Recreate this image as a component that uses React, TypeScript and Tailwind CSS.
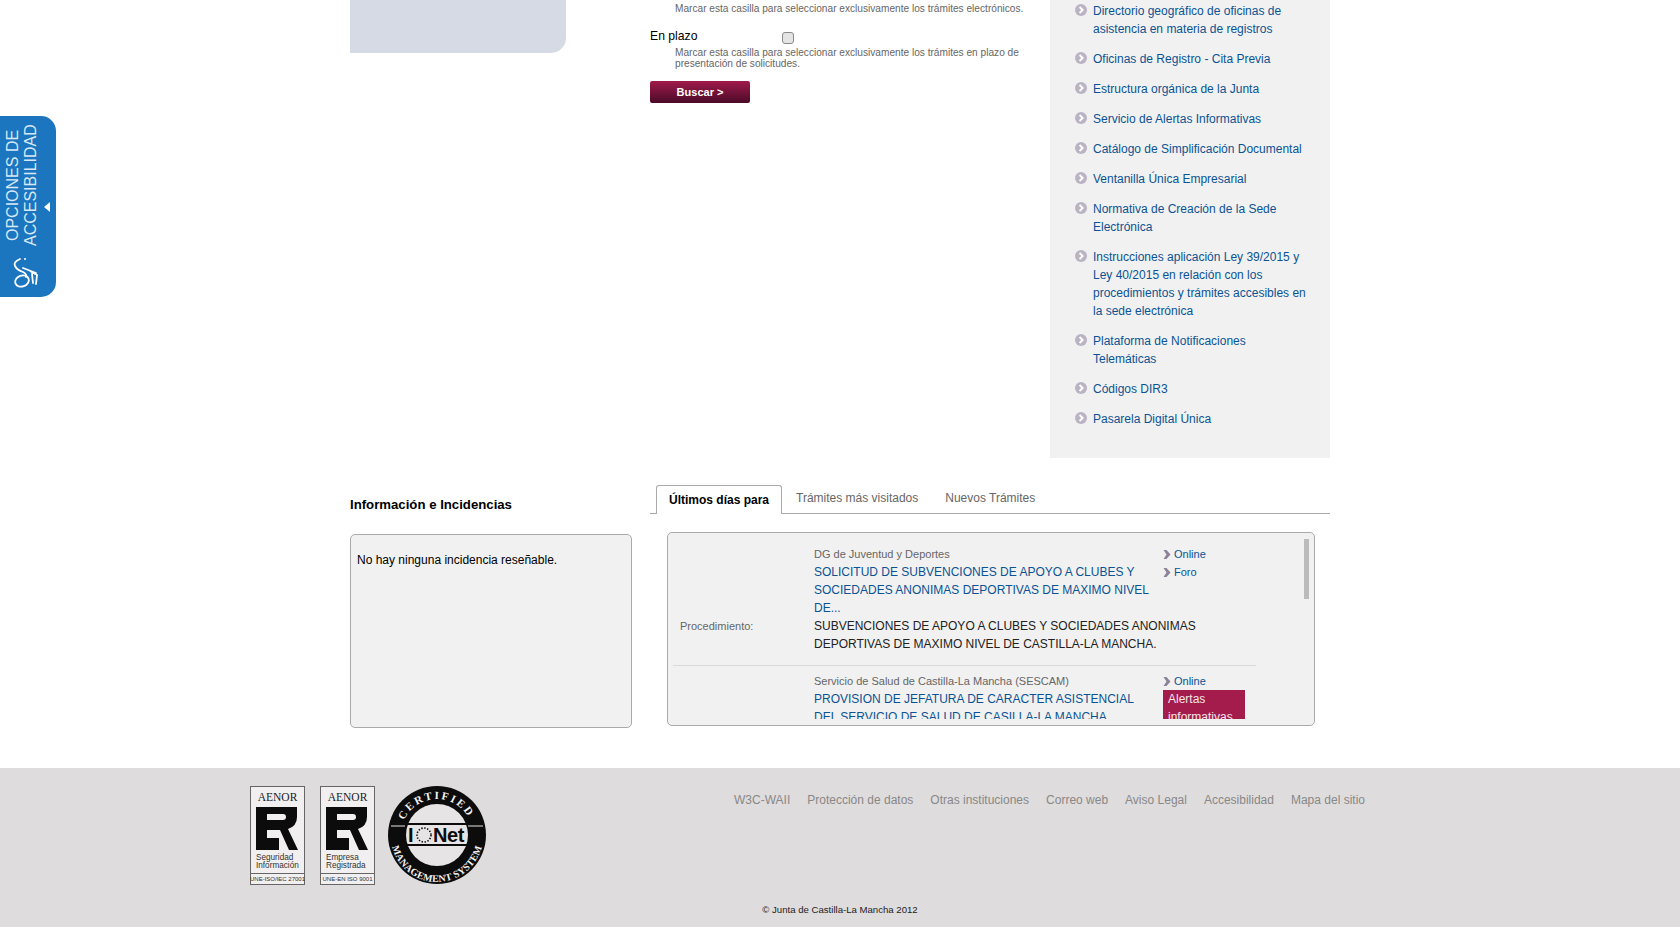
import React from 'react';

const sideLinks = [
  'Directorio geográfico de oficinas de asistencia en materia de registros',
  'Oficinas de Registro - Cita Previa',
  'Estructura orgánica de la Junta',
  'Servicio de Alertas Informativas',
  'Catálogo de Simplificación Documental',
  'Ventanilla Única Empresarial',
  'Normativa de Creación de la Sede Electrónica',
  'Instrucciones aplicación Ley 39/2015 y Ley 40/2015 en relación con los procedimientos y trámites accesibles en la sede electrónica',
  'Plataforma de Notificaciones Telemáticas',
  'Códigos DIR3',
  'Pasarela Digital Única',
];

const footerLinks = ['W3C-WAII', 'Protección de datos', 'Otras instituciones', 'Correo web', 'Aviso Legal', 'Accesibilidad', 'Mapa del sitio'];

const Bullet = () => (
  <svg width="12" height="12" viewBox="0 0 12 12" className="mt-[2px] shrink-0">
    <circle cx="6" cy="6" r="6" fill="#b9b3c4" />
    <path d="M4.6 3 L7.6 6 L4.6 9" fill="none" stroke="#fff" strokeWidth="2" />
  </svg>
);

const Chevron = () => (
  <svg width="8" height="9" viewBox="0 0 8 9" className="mr-[3px] shrink-0">
    <path d="M0.5 0 H3.5 L7.5 4.5 L3.5 9 H0.5 L3.5 4.5 Z" fill="#8d8398" />
  </svg>
);

const LinkRow = ({ label }: { label: string }) => (
  <div className="flex h-[18px] items-center text-[11px] text-[#0b5394]">
    <Chevron />
    {label}
  </div>
);

const Er = () => (
  <path
    fill="#0c0c0c"
    fillRule="evenodd"
    d="M6 21 H47 V31 Q47 40 38 43 L48 64 H39 L30 44 H17 V52 H29 V64 H6 Z M17 28 H33 Q36 28 36 31 Q36 34 33 34 H17 Z"
  />
);

const AenorLogo = ({ top, bottom, code }: { top: string; bottom: string; code: string }) => (
  <svg width="55" height="99" viewBox="0 0 55 99" className="shrink-0">
    <rect x="0.5" y="0.5" width="54" height="98" fill="#f1efef" stroke="#666" />
    <text x="27.5" y="15" textAnchor="middle" fontFamily="Liberation Serif" fontSize="11.5" fill="#222">AENOR</text>
    <Er />
    <text x="6" y="74" fontFamily="Liberation Sans" fontSize="8.2" fill="#333">{top}</text>
    <text x="6" y="82" fontFamily="Liberation Sans" fontSize="8.2" fill="#333">{bottom}</text>
    <line x1="0" y1="87.5" x2="55" y2="87.5" stroke="#666" />
    <text x="27.5" y="95" textAnchor="middle" fontFamily="Liberation Sans" fontSize="6" fill="#333">{code}</text>
  </svg>
);

const IqNetLogo = () => (
  <svg width="98" height="98" viewBox="0 0 98 98" className="shrink-0">
    <defs>
      <path id="arc-top" d="M13 49 A36 36 0 0 1 85 49" />
      <path id="arc-bottom" d="M3 50 A46 46 0 0 0 95 50" />
    </defs>
    <circle cx="49" cy="49" r="49" fill="#0c0c0c" />
    <circle cx="49" cy="49" r="31" fill="#e6e4e4" />
    <rect x="17" y="37" width="62" height="2" fill="#0c0c0c" />
    <rect x="17" y="58" width="62" height="2" fill="#0c0c0c" />
    <path d="M3 40 H17 M80 40 H95" stroke="#e6e4e4" strokeWidth="1" />
    <text fontFamily="Liberation Serif" fontWeight="700" fontSize="11" fill="#f3f3f3" letterSpacing="2.2">
      <textPath href="#arc-top" startOffset="15">CERTIFIED</textPath>
    </text>
    <text fontFamily="Liberation Serif" fontWeight="700" fontSize="10" fill="#f3f3f3" letterSpacing="0.2">
      <textPath href="#arc-bottom" startOffset="72" textAnchor="middle">MANAGEMENT SYSTEM</textPath>
    </text>
    <text x="20" y="56" fontFamily="Liberation Sans" fontWeight="700" fontSize="20" fill="#0c0c0c">I</text>
    <circle cx="36" cy="49" r="7" fill="none" stroke="#0c0c0c" strokeWidth="1.6" strokeDasharray="1.4 1.6" />
    <text x="45" y="56" fontFamily="Liberation Sans" fontWeight="700" fontSize="20" letterSpacing="-0.4" fill="#0c0c0c">Net</text>
  </svg>
);

const AccessTab = () => (
  <div className="absolute left-0 top-[116px] flex h-[181px] w-[56px] flex-col items-start rounded-r-[15px] bg-[#1b75bf]">
    <div className="h-[130px] w-full">
      <div className="ml-[4px] h-[138px] rotate-180 text-center text-[16px] leading-[18px] text-[#d8e8f6] [writing-mode:vertical-rl]">
        <div>OPCIONES DE</div>
        <div>ACCESIBILIDAD</div>
      </div>
    </div>
    <div className="absolute left-[44px] top-[86px] h-0 w-0 border-y-[5px] border-r-[6px] border-y-transparent border-r-white" />
    <svg width="56" height="40" viewBox="0 139 56 40" className="mt-[9px]" fill="none" stroke="#fff" strokeWidth="1.8" strokeLinecap="round">
      <path d="M20 143 Q13 146 15 150 Q17 154 23 156 Q27 158 26 161" />
      <circle cx="25" cy="143" r="1" fill="#fff" stroke="none" />
      <ellipse cx="22" cy="165" rx="7" ry="5.5" transform="rotate(-20 22 165)" />
      <path d="M23 152 L36 157 M30 155 L37 159 L36 168 M32 158 L33 167" />
    </svg>
  </div>
);

const App = () => (
  <div className="relative h-[927px] overflow-hidden bg-white font-['Liberation_Sans',Arial,sans-serif] text-[12px]">
    <AccessTab />
    <main className="ml-[350px] w-[980px]">
      <div className="flex h-[458px]">
        <div className="h-[53px] w-[216px] rounded-br-[15px] bg-[#d6dae4]" />
        <form className="ml-[84px] w-[400px] pt-[3px]">
          <p className="pl-[25px] text-[10.15px] leading-[11px] text-[#666]">
            Marcar esta casilla para seleccionar exclusivamente los trámites electrónicos.
          </p>
          <div className="mt-[13px] flex h-[18px] items-center">
            <label className="w-[132px] text-[12.2px] text-black">En plazo</label>
            <span className="mt-[4px] h-[12px] w-[12px] rounded-[3px] border border-[#8a8a8a] bg-[#e4e4e4]" />
          </div>
          <p className="mt-[2px] w-[370px] pl-[25px] text-[10.15px] leading-[11px] text-[#666]">
            Marcar esta casilla para seleccionar exclusivamente los trámites en plazo de presentación de solicitudes.
          </p>
          <button type="button" className="mt-[12px] h-[22px] w-[100px] rounded-[2px] bg-gradient-to-b from-[#a01a4b] to-[#4c0b29] text-[11px] font-bold text-white">
            Buscar &gt;
          </button>
        </form>
        <aside className="ml-auto w-[280px] bg-[#f1f1f1] pl-[25px] pr-[20px] pt-[2px]">
          <ul className="flex flex-col gap-[12px]">
            {sideLinks.map((link) => (
              <li key={link} className="flex gap-[6px] text-[12px] leading-[18px] text-[#0b5394]">
                <Bullet />
                <span>{link}</span>
              </li>
            ))}
          </ul>
        </aside>
      </div>

      <div className="flex">
        <section className="w-[282px]">
          <h2 className="pt-[38px] text-[13.2px] font-bold leading-[18px] text-black">Información e Incidencias</h2>
          <div className="mt-[20px] h-[194px] rounded-[5px] border border-[#aaa] bg-[#f1f1f1] pl-[6px] pt-[16px] leading-[18px] text-black">
            No hay ninguna incidencia reseñable.
          </div>
        </section>
        <section className="ml-[18px] w-[680px] pt-[27px]">
          <div className="flex h-[29px] border-b border-[#aaa] pl-[6px]">
            <div className="h-[29px] w-[126px] rounded-t-[3px] border border-b-0 border-[#aaa] bg-white text-center font-bold leading-[28px] text-black">
              Últimos días para
            </div>
            <div className="px-[14px] leading-[26px] text-[#666]">Trámites más visitados</div>
            <div className="px-[13px] leading-[26px] text-[#666]">Nuevos Trámites</div>
          </div>
          <div className="relative ml-[17px] mt-[18px] h-[194px] w-[648px] rounded-[5px] border border-[#aaa] bg-[#f1f1f1]">
            <div className="absolute left-[636px] top-[6px] h-[60px] w-[5px] bg-[#bbb]" />
            <div className="h-[186px] overflow-hidden pl-[5px] leading-[18px]">
              <article className="grid w-[583px] grid-cols-[134px_349px_93px] border-b border-[#d8d8d8] pb-[12px] pl-[7px] pt-[12px]">
                <div />
                <div>
                  <div className="text-[11px] text-[#666]">DG de Juventud y Deportes</div>
                  <a className="block w-[335px] text-[#0b5394]">SOLICITUD DE SUBVENCIONES DE APOYO A CLUBES Y SOCIEDADES ANONIMAS DEPORTIVAS DE MAXIMO NIVEL DE...</a>
                </div>
                <div>
                  <LinkRow label="Online" />
                  <LinkRow label="Foro" />
                </div>
                <div className="text-[11px] text-[#666]">Procedimiento:</div>
                <div className="col-span-2 w-[400px] text-[#222]">SUBVENCIONES DE APOYO A CLUBES Y SOCIEDADES ANONIMAS DEPORTIVAS DE MAXIMO NIVEL DE CASTILLA-LA MANCHA.</div>
              </article>
              <article className="grid w-[583px] grid-cols-[134px_349px_93px] pl-[7px] pt-[6px]">
                <div />
                <div>
                  <div className="text-[11px] text-[#666]">Servicio de Salud de Castilla-La Mancha (SESCAM)</div>
                  <a className="block w-[335px] text-[#0b5394]">PROVISION DE JEFATURA DE CARACTER ASISTENCIAL DEL SERVICIO DE SALUD DE CASILLA-LA MANCHA</a>
                </div>
                <div>
                  <LinkRow label="Online" />
                  <div className="w-[82px] bg-[#a31c4b] px-[5px] text-[#f3e6ea]">Alertas informativas</div>
                </div>
              </article>
            </div>
          </div>
        </section>
      </div>
    </main>

    <footer className="absolute inset-x-0 top-[768px] h-[159px] bg-[#dfdcdd] pt-[18px]">
      <div className="flex justify-between pl-[250px] pr-[315px]">
        <div className="flex items-start">
          <AenorLogo top="Seguridad" bottom="Información" code="UNE-ISO/IEC 27001" />
          <div className="ml-[15px]">
            <AenorLogo top="Empresa" bottom="Registrada" code="UNE-EN ISO 9001" />
          </div>
          <div className="ml-[13px]">
            <IqNetLogo />
          </div>
        </div>
        <nav className="mt-[5px] flex gap-[17px] text-[12px] leading-[18px] text-[#888]">
          {footerLinks.map((link) => (
            <a key={link}>{link}</a>
          ))}
        </nav>
      </div>
      <p className="mt-[18px] text-center text-[9.6px] leading-[14px] text-[#222]">© Junta de Castilla-La Mancha 2012</p>
    </footer>
  </div>
);

export default App;
